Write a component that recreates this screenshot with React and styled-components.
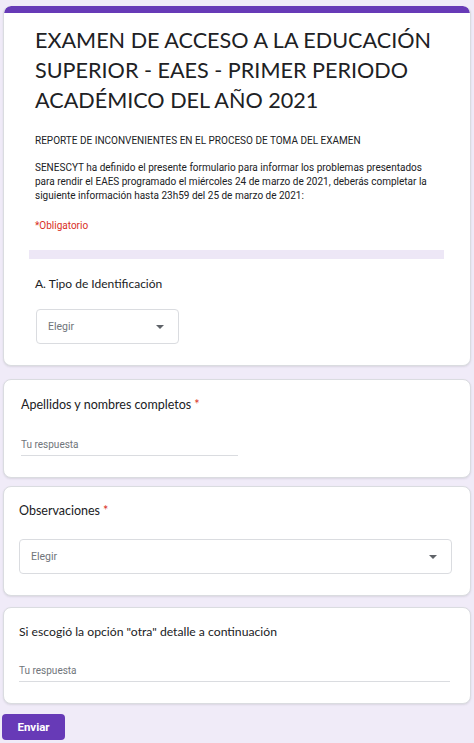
import React from "react";
import styled, { createGlobalStyle } from "styled-components";

const Global = createGlobalStyle`
  html, body { margin: 0; padding: 0; background: #f0ebf8; }
  body { font-family: Roboto, "Liberation Sans", Arial, sans-serif; }
  * { box-sizing: border-box; }
`;

const Page = styled.div`
  display: flex;
  flex-direction: column;
  padding: 6px 3px 5px 3px;
  width: 474px;
`;

const Card = styled.section`
  background: #fff;
  border: 1px solid #dadce0;
  border-radius: 8px;
  margin-top: ${(p) => p.$gap || 0}px;
  padding: ${(p) => p.$pad || "16px 18px 22px 18px"};
  box-shadow: 0 1px 2px rgba(60, 64, 67, 0.12);
  overflow: hidden;
  position: relative;
`;

const HeadCard = styled(Card)`
  border-top: none;
  padding: 0;
  border-radius: 8px;
`;

const TopBar = styled.div`
  height: 7px;
  background: #673ab7;
  border-radius: 8px 8px 0 0;
`;

const HeadBody = styled.div`
  padding: 12px 28px 21px 31px;
`;

const Title = styled.h1`
  margin: 0;
  font-family: Lato, "Open Sans", sans-serif;
  font-weight: 400;
  font-size: 21.6px;
  line-height: 30px;
  color: #202124;
`;

const Sub = styled.p`
  margin: ${(p) => p.$mt || 0}px 0 0 0;
  font-size: 10px;
  line-height: 14px;
  color: ${(p) => (p.$red ? "#d93025" : "#202124")};
`;

const Divider = styled.div`
  height: 9px;
  background: #ede7f6;
  margin: 17px -2px 0 -6px;
`;

const Label = styled.div`
  font-family: Lato, "Open Sans", sans-serif;
  font-size: ${(p) => p.$size || 12.5}px;
  line-height: 18px;
  color: #202124;
  margin-top: ${(p) => p.$mt || 0}px;
`;

const Star = styled.span`
  color: #d93025;
  margin-left: 3px;
`;

const Select = styled.div`
  display: flex;
  align-items: center;
  justify-content: space-between;
  width: ${(p) => p.$w || "100%"};
  height: 35px;
  margin-top: ${(p) => p.$mt || 0}px;
  margin-left: ${(p) => p.$ml || 0}px;
  padding: 0 14px 0 11px;
  border: 1px solid #dadce0;
  border-radius: 4px;
  font-size: 10.5px;
  color: #70757a;
`;

const Caret = styled.span`
  width: 0;
  height: 0;
  border-left: 4px solid transparent;
  border-right: 4px solid transparent;
  border-top: 4px solid #5f6368;
`;

const Answer = styled.div`
  width: ${(p) => p.$w};
  margin-top: ${(p) => p.$mt || 0}px;
  padding-bottom: 3px;
  border-bottom: 1px solid #dadce0;
  font-size: 10px;
  line-height: 14px;
  color: #70757a;
`;

const Button = styled.button`
  margin-top: 10px;
  margin-left: -1px;
  width: 63px;
  height: 26px;
  border: none;
  border-radius: 4px;
  background: #673ab7;
  color: #fff;
  font-family: Roboto, sans-serif;
  font-weight: 700;
  font-size: 11.5px;
  padding: 0;
`;

export default function App() {
  return (
    <>
      <Global />
      <Page>
        <HeadCard>
          <TopBar />
          <HeadBody>
            <Title>
              EXAMEN DE ACCESO A LA EDUCACIÓN SUPERIOR - EAES - PRIMER PERIODO
              ACADÉMICO DEL AÑO 2021
            </Title>
            <Sub $mt={19}>
              REPORTE DE INCONVENIENTES EN EL PROCESO DE TOMA DEL EXAMEN
            </Sub>
            <Sub $mt={13}>
              SENESCYT ha definido el presente formulario para informar los
              problemas presentados para rendir el EAES programado el miércoles
              24 de marzo de 2021, deberás completar la siguiente información
              hasta 23h59 del 25 de marzo de 2021:
            </Sub>
            <Sub $mt={16} $red>
              *Obligatorio
            </Sub>
            <Divider />
            <Label $mt={16} $size={12}>
              A. Tipo de Identificación
            </Label>
            <Select $w="143px" $mt={16} $ml={1}>
              Elegir
              <Caret />
            </Select>
          </HeadBody>
        </HeadCard>

        <Card $gap={13} $pad="16px 18px 21px 17px">
          <Label $size={12.5}>
            Apellidos y nombres completos<Star>*</Star>
          </Label>
          <Answer $w="217px" $mt={24}>
            Tu respuesta
          </Answer>
        </Card>

        <Card $gap={8} $pad="15px 18px 21px 15px">
          <Label $size={12.5}>
            Observaciones<Star>*</Star>
          </Label>
          <Select $mt={19}>
            Elegir
            <Caret />
          </Select>
        </Card>

        <Card $gap={11} $pad="15px 20px 21px 15px">
          <Label $size={12.2}>
            Si escogió la opción "otra" detalle a continuación
          </Label>
          <Answer $w="100%" $mt={23}>
            Tu respuesta
          </Answer>
        </Card>

        <div>
          <Button>Enviar</Button>
        </div>
      </Page>
    </>
  );
}
